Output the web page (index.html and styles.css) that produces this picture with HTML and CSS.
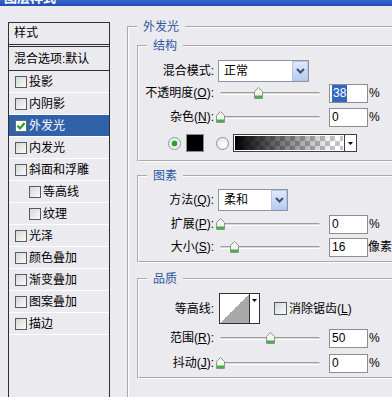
FILE: index.html
```html
<!DOCTYPE html>
<html lang="zh-CN">
<head>
<meta charset="utf-8">
<title>图层样式</title>
<link rel="stylesheet" href="styles.css">
</head>
<body>
<div class="titlebar"><span class="title">图层样式</span></div>
<div class="main">
  <div class="stylepanel">
    <div class="sp-head">样式</div>
    <div class="sp-blend">混合选项:默认</div>
    <ul class="sp-list">
      <li><span class="cb"></span>投影</li>
      <li><span class="cb"></span>内阴影</li>
      <li class="sel"><span class="cb on"><svg width="10" height="10" viewBox="0 0 10 10"><path d="M1.5 4.8 L3.9 7.4 L8.6 2" fill="none" stroke="#1fa01f" stroke-width="2"/></svg></span>外发光</li>
      <li><span class="cb"></span>内发光</li>
      <li><span class="cb"></span>斜面和浮雕</li>
      <li class="sub"><span class="cb"></span>等高线</li>
      <li class="sub"><span class="cb"></span>纹理</li>
      <li><span class="cb"></span>光泽</li>
      <li><span class="cb"></span>颜色叠加</li>
      <li><span class="cb"></span>渐变叠加</li>
      <li><span class="cb"></span>图案叠加</li>
      <li><span class="cb"></span>描边</li>
    </ul>
  </div>

  <div class="settings">
    <fieldset class="grp outer">
      <legend>外发光</legend>

      <fieldset class="grp g-struct">
        <legend class="inner-legend">结构</legend>
        <div class="row">
          <span class="lbl">混合模式:</span>
          <div class="select w-mode"><span class="val">正常</span><span class="dd"><svg width="9" height="6" viewBox="0 0 9 6"><path d="M1 1 L4.5 4.5 L8 1" fill="none" stroke="#3d4f78" stroke-width="2"/></svg></span></div>
        </div>
        <div class="row">
          <span class="lbl">不透明度(<u>O</u>):</span>
          <div class="slider"><span class="track"></span><span class="thumb" style="left:38%"><svg width="9" height="12" viewBox="0 0 9 12"><path d="M0.5 4.5 L4.5 0.5 L8.5 4.5 V11.5 H0.5 Z" fill="#f3f4ef" stroke="#8b978b"/><rect x="1" y="8.5" width="7" height="2.5" fill="#45b045"/></svg></span></div>
          <span class="num"><span class="hl">38</span></span>
          <span class="unit">%</span>
        </div>
        <div class="row r-noise">
          <span class="lbl">杂色(<u>N</u>):</span>
          <div class="slider"><span class="track"></span><span class="thumb" style="left:0%"><svg width="9" height="12" viewBox="0 0 9 12"><path d="M0.5 4.5 L4.5 0.5 L8.5 4.5 V11.5 H0.5 Z" fill="#f3f4ef" stroke="#8b978b"/><rect x="1" y="8.5" width="7" height="2.5" fill="#45b045"/></svg></span></div>
          <span class="num">0</span>
          <span class="unit">%</span>
        </div>
        <div class="colorrow">
          <span class="radio on"></span>
          <span class="swatch"></span>
          <span class="radio r2"></span>
          <div class="gradsel"><span class="grad"></span><span class="gdd"><svg width="5" height="3" viewBox="0 0 5 3"><path d="M0 0 H5 L2.5 3 Z" fill="#000"/></svg></span></div>
        </div>
      </fieldset>

      <fieldset class="grp g-elem">
        <legend class="inner-legend">图素</legend>
        <div class="row">
          <span class="lbl">方法(<u>Q</u>):</span>
          <div class="select w-method"><span class="val">柔和</span><span class="dd"><svg width="9" height="6" viewBox="0 0 9 6"><path d="M1 1 L4.5 4.5 L8 1" fill="none" stroke="#3d4f78" stroke-width="2"/></svg></span></div>
        </div>
        <div class="row r-spread">
          <span class="lbl">扩展(<u>P</u>):</span>
          <div class="slider"><span class="track"></span><span class="thumb" style="left:0%"><svg width="9" height="12" viewBox="0 0 9 12"><path d="M0.5 4.5 L4.5 0.5 L8.5 4.5 V11.5 H0.5 Z" fill="#f3f4ef" stroke="#8b978b"/><rect x="1" y="8.5" width="7" height="2.5" fill="#45b045"/></svg></span></div>
          <span class="num">0</span>
          <span class="unit">%</span>
        </div>
        <div class="row r-size">
          <span class="lbl">大小(<u>S</u>):</span>
          <div class="slider"><span class="track"></span><span class="thumb" style="left:14%"><svg width="9" height="12" viewBox="0 0 9 12"><path d="M0.5 4.5 L4.5 0.5 L8.5 4.5 V11.5 H0.5 Z" fill="#f3f4ef" stroke="#8b978b"/><rect x="1" y="8.5" width="7" height="2.5" fill="#45b045"/></svg></span></div>
          <span class="num">16</span>
          <span class="unit unit-px">像素</span>
        </div>
      </fieldset>

      <fieldset class="grp g-quality">
        <legend class="inner-legend">品质</legend>
        <div class="row r-contour">
          <span class="lbl">等高线:</span>
          <div class="contour"><span class="cpreview"></span><span class="cdd"><svg width="5" height="3" viewBox="0 0 5 3"><path d="M0 0 H5 L2.5 3 Z" fill="#000"/></svg></span></div>
          <span class="cb cb-aa"></span>
          <span class="aa-label">消除锯齿(<u>L</u>)</span>
        </div>
        <div class="row r-range">
          <span class="lbl">范围(<u>R</u>):</span>
          <div class="slider"><span class="track"></span><span class="thumb" style="left:50%"><svg width="9" height="12" viewBox="0 0 9 12"><path d="M0.5 4.5 L4.5 0.5 L8.5 4.5 V11.5 H0.5 Z" fill="#f3f4ef" stroke="#8b978b"/><rect x="1" y="8.5" width="7" height="2.5" fill="#45b045"/></svg></span></div>
          <span class="num">50</span>
          <span class="unit">%</span>
        </div>
        <div class="row r-jitter">
          <span class="lbl">抖动(<u>J</u>):</span>
          <div class="slider"><span class="track"></span><span class="thumb" style="left:0%"><svg width="9" height="12" viewBox="0 0 9 12"><path d="M0.5 4.5 L4.5 0.5 L8.5 4.5 V11.5 H0.5 Z" fill="#f3f4ef" stroke="#8b978b"/><rect x="1" y="8.5" width="7" height="2.5" fill="#45b045"/></svg></span></div>
          <span class="num">0</span>
          <span class="unit">%</span>
        </div>
      </fieldset>
    </fieldset>
  </div>
</div>
</body>
</html>
```

FILE: styles.css
```css
* { box-sizing: border-box; }
html, body { margin: 0; padding: 0; }
body {
  width: 392px;
  height: 397px;
  overflow: hidden;
  background: #ebeaee;
  color: #000;
  font: 12px/14px "Liberation Sans", "Noto Sans CJK SC", sans-serif;
}
u { text-decoration: underline; }

.titlebar {
  height: 6px;
  overflow: hidden;
  background: linear-gradient(#3566d0, #1f4cb0);
}
.title {
  display: block;
  margin-top: -9px;
  padding-left: 4px;
  color: #fff;
  font-weight: bold;
  font-size: 13px;
  line-height: 14px;
}

.main {
  display: flex;
  padding: 14px 0 0 8px;
}

/* left style list */
.stylepanel {
  flex: none;
  width: 102px;
  height: 390px;
  margin-top: 2px;
  border: 1px solid #303030;
  background: #ebeaee;
}
.sp-head {
  height: 24px;
  padding-left: 5px;
  line-height: 21px;
  border-bottom: 3px double #303030;
}
.sp-blend {
  height: 24px;
  padding: 2px 0 0 5px;
  line-height: 21px;
  border-bottom: 1px solid #303030;
}
.sp-list { list-style: none; margin: 0; padding: 0; }
.sp-list li {
  display: flex;
  align-items: center;
  height: 22px;
  padding-left: 6px;
  border-bottom: 1px solid #fff;
}
.sp-list li.sub { padding-left: 20px; }
.sp-list li.sel { background: #3161a8; color: #fff; }

.cb {
  flex: none;
  display: inline-flex;
  align-items: center;
  justify-content: center;
  width: 12px;
  height: 12px;
  margin-right: 2px;
  border: 1px solid #4e5c6c;
  background: linear-gradient(135deg, #d6d6d2, #fbfbfb);
}
.cb.on { background: #fff; border-color: #5d6a7a; }

/* right settings */
.settings {
  flex: none;
  width: 300px;
  margin-left: 17px;
}
.grp {
  margin: 0;
  min-width: 0;
  border: 2px groove #fdfdfd;
}
.grp legend {
  padding: 0 6px;
  color: #2f57a3;
  line-height: 14px;
}
.grp legend.inner-legend { margin-left: 8px; }

.outer {
  padding: 5px 8px 30px 8px;
  margin-top: 0;
}
.g-struct { padding: 7px 0 7px 0; }
.g-elem { padding: 6px 0 3px 0; margin-top: 7px; }
.g-quality { padding: 7px 0 3px 0; margin-top: 9px; }

.row {
  display: flex;
  align-items: center;
  height: 22px;
}
.r-noise { margin-top: 2px; }
.r-spread { margin-top: 2px; }
.r-size { margin-top: 1px; }
.r-contour { height: 31px; }
.r-range { margin-top: 3px; }
.r-jitter { margin-top: 3px; }

.lbl {
  flex: none;
  width: 75px;
  margin-right: 4px;
  text-align: right;
  white-space: nowrap;
}

.select {
  flex: none;
  display: flex;
  align-items: center;
  height: 22px;
  border: 1px solid #8d94a3;
  background: #fff;
}
.w-mode { width: 91px; }
.w-method { width: 70px; }
.select .val { flex: 1; padding-left: 5px; }
.dd {
  flex: none;
  display: flex;
  align-items: center;
  justify-content: center;
  width: 16px;
  height: 20px;
  border: 1px solid #b6c5e6;
  background: linear-gradient(#dfe8fb, #b9cbf1);
}

.slider {
  position: relative;
  flex: none;
  width: 100px;
  height: 22px;
  margin: 0 2px;
}
.track {
  position: absolute;
  left: 0;
  right: 0;
  top: 10px;
  height: 3px;
  border-radius: 2px;
  border-top: 1px solid #9c9c9c;
  border-bottom: 1px solid #fff;
  background: #d8d8d8;
}
.thumb {
  position: absolute;
  top: 5px;
  width: 9px;
  height: 12px;
  margin-left: -4px;
  display: block;
}
.thumb svg { display: block; }

.num {
  flex: none;
  width: 39px;
  height: 19px;
  margin-left: 7px;
  padding-left: 2px;
  border: 1px solid #8c8c94;
  background: #fff;
  line-height: 17px;
}
.hl {
  display: inline-block;
  padding: 0 1px;
  background: #3468bf;
  color: #fff;
}
.unit { margin-left: 1px; white-space: nowrap; }
.unit.unit-px { margin-left: 0; }

.colorrow {
  display: flex;
  align-items: center;
  height: 20px;
  margin-top: 5px;
}
.radio {
  flex: none;
  width: 13px;
  height: 13px;
  margin-left: 29px;
  border: 1px solid #8494aa;
  border-radius: 50%;
  background: radial-gradient(circle at 65% 65%, #ffffff, #e2e2dc);
}
.radio.on {
  background: radial-gradient(circle, #2aa12a 0 2.5px, #bfe6bf 3px 3.5px, #f4f4f0 4px);
}
.radio.r2 { margin-left: 12px; }
.swatch {
  flex: none;
  width: 18px;
  height: 18px;
  margin-left: 5px;
  border: 1px solid #8a8a8a;
  background: #000;
}
.gradsel {
  flex: none;
  display: flex;
  width: 124px;
  height: 18px;
  margin-left: 4px;
  border: 1px solid #3e3e3e;
  background: #fff;
}
.grad {
  flex: 1;
  border: 1px solid #fff;
  background:
    linear-gradient(to right, #000, rgba(0,0,0,0) 92%),
    conic-gradient(#c4c4c4 25%, #fff 0 50%, #c4c4c4 0 75%, #fff 0) 0 0 / 10px 10px;
}
.gdd {
  flex: none;
  display: flex;
  align-items: center;
  justify-content: center;
  width: 12px;
  border-left: 1px solid #3e3e3e;
}

.contour {
  flex: none;
  display: flex;
  width: 41px;
  height: 31px;
  margin-left: 1px;
  border: 1px solid #303030;
  background: #fff;
}
.cpreview {
  width: 30px;
  border-right: 1px solid #303030;
  background: linear-gradient(to top left, #a9a9a9 50%, #fff 50%);
}
.cdd {
  flex: 1;
  display: flex;
  justify-content: center;
  padding-top: 5px;
}
.cdd svg { display: block; }
.cb-aa {
  width: 13px;
  height: 13px;
  margin-left: 14px;
  margin-right: 2px;
}
.aa-label { white-space: nowrap; }
```
